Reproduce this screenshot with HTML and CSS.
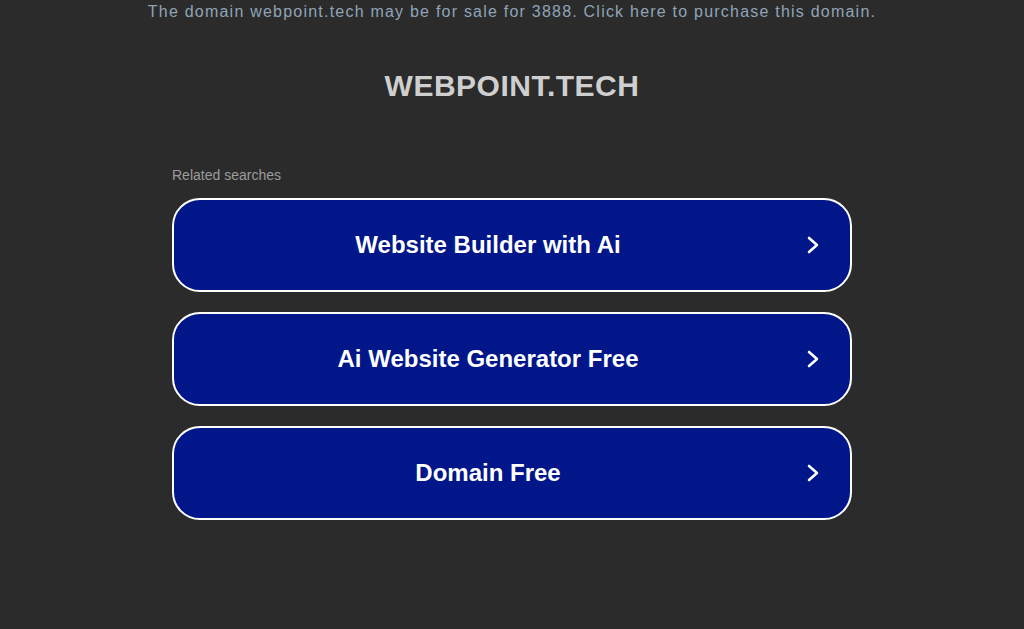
FILE: index.html
```html
<!DOCTYPE html>
<html lang="en">
  <head>
    <meta charset="UTF-8" />
    <meta name="viewport" content="width=device-width, initial-scale=1.0" />
    <title>webpoint.tech</title>
    <link rel="stylesheet" href="styles.css">
  </head>
  <body>
    <div class="sale-notice">
      <a href="#">The domain webpoint.tech may be for sale for 3888. Click here to purchase this domain.</a>
    </div>

    <h1 class="domain">WEBPOINT.TECH</h1>

    <div class="searches">
      <p class="searches-label">Related searches</p>
      <div class="search-list">
        <a class="search-item" href="#">
          <span class="search-text">Website Builder with Ai</span>
          <svg class="chevron" viewBox="0 0 14 20" width="14" height="20">
            <path d="M3 3 L11 10 L3 17" />
          </svg>
        </a>
        <a class="search-item" href="#">
          <span class="search-text">Ai Website Generator Free</span>
          <svg class="chevron" viewBox="0 0 14 20" width="14" height="20">
            <path d="M3 3 L11 10 L3 17" />
          </svg>
        </a>
        <a class="search-item" href="#">
          <span class="search-text">Domain Free</span>
          <svg class="chevron" viewBox="0 0 14 20" width="14" height="20">
            <path d="M3 3 L11 10 L3 17" />
          </svg>
        </a>
      </div>
    </div>
  </body>
</html>
```

FILE: styles.css
```css
body {
  margin: 0;
  background-color: #2b2b2b;
  font-family: "Liberation Sans", Arial, sans-serif;
}
.sale-notice {
  text-align: center;
  padding-top: 3px;
  font-size: 16px;
  line-height: 18px;
  letter-spacing: 1.22px;
}
.sale-notice a {
  color: #90a4b7;
  text-decoration: none;
}
.domain {
  margin: 48px 0 0;
  text-align: center;
  font-size: 30px;
  line-height: 34px;
  font-weight: bold;
  color: #cfcfcf;
  letter-spacing: 0.5px;
}
.searches {
  width: 680px;
  margin: 64px auto 0;
}
.searches-label {
  margin: 0 0 15px;
  font-size: 14px;
  line-height: 16px;
  color: #9b9b9b;
}
.search-list {
  display: flex;
  flex-direction: column;
  gap: 20px;
}
.search-item {
  display: flex;
  align-items: center;
  height: 90px;
  border: 2px solid #ffffff;
  border-radius: 28px;
  background-color: #011689;
  color: #ffffff;
  text-decoration: none;
  padding: 0 30px 0 0;
}
.search-text {
  flex: 1;
  text-align: center;
  font-size: 24px;
  font-weight: bold;
  margin-left: -4px;
}
.chevron {
  fill: none;
  stroke: #ffffff;
  stroke-width: 2.6;
  stroke-linecap: round;
  stroke-linejoin: round;
}
```
